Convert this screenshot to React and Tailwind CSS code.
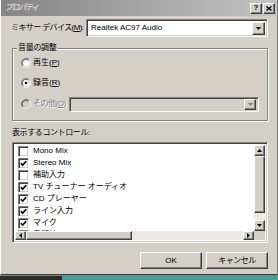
import React from 'react';

const raised =
  'bg-[#d4d0c8] border border-t-white border-l-white border-r-[#404040] border-b-[#404040] shadow-[inset_-1px_-1px_0_#808080]';
const sunken =
  'border border-t-[#808080] border-l-[#808080] border-r-white border-b-white shadow-[inset_1px_1px_0_#404040,inset_-1px_-1px_0_#d4d0c8]';

const Tri = ({ dir = 'down', color = '#000' }) => {
  const d = {
    down: 'M0 0h5L2.5 3z',
    up: 'M0 3h5L2.5 0z',
    left: 'M3 0v5L0 2.5z',
    right: 'M0 0v5l3-2.5z',
  }[dir];
  const vert = dir === 'down' || dir === 'up';
  return (
    <svg width={vert ? 5 : 3} height={vert ? 3 : 5} viewBox={vert ? '0 0 5 3' : '0 0 3 5'}>
      <path d={d} fill={color} />
    </svg>
  );
};

const Radio = ({ checked, disabled }) => (
  <svg width="10" height="10" viewBox="0 0 12 12" className="shrink-0">
    <circle cx="6" cy="6" r="4.6" fill={disabled ? '#d4d0c8' : '#fff'} />
    <path d="M9.9 2.1A5.5 5.5 0 0 0 2.1 9.9" stroke="#808080" fill="none" />
    <path d="M2.1 9.9A5.5 5.5 0 0 0 9.9 2.1" stroke="#fff" fill="none" />
    <path d="M9.2 2.8A4.5 4.5 0 0 0 2.8 9.2" stroke="#404040" fill="none" />
    <path d="M2.8 9.2A4.5 4.5 0 0 0 9.2 2.8" stroke="#d4d0c8" fill="none" />
    {checked && <circle cx="6" cy="6" r="1.6" fill="#000" />}
  </svg>
);

const Check = ({ checked }) => (
  <div className={`w-[11px] h-[11px] bg-white shrink-0 flex items-center justify-center ${sunken}`}>
    {checked && (
      <svg width="7" height="7" viewBox="0 0 7 7">
        <path d="M0.8 3.2L2.7 5.1L6.2 1.2" stroke="#000" strokeWidth="1.6" fill="none" />
      </svg>
    )}
  </div>
);

const controls = [
  ['Mono Mix', false],
  ['Stereo Mix', true],
  ['補助入力', false],
  ['TV チューナー オーディオ', true],
  ['CD プレーヤー', true],
  ['ライン入力', true],
  ['マイク', true],
  ['電話線', false],
];

export default function App() {
  return (
    <div className="w-[278px] h-[280px] flex flex-col overflow-hidden bg-[#d4d0c8] text-[8px] leading-none text-black font-['Liberation_Sans','Noto_Sans_CJK_JP',sans-serif]">
      <div className="flex-1 flex flex-col border-l border-l-white border-r border-r-[#808080] border-b border-b-[#404040]">
        {/* title bar */}
        <div className="h-[16px] flex items-center pl-[4px] pr-[2px] bg-linear-to-r from-[#858585] to-[#c4c4c4]">
          <span className="font-bold italic text-[#d4d0c8] tracking-[-1.3px]">プロパティ</span>
          <div className="ml-auto flex gap-[1px]">
            <div className={`w-[12px] h-[11px] flex items-center justify-center font-bold text-[8px] ${raised}`}>?</div>
            <div className={`w-[12px] h-[11px] flex items-center justify-center ${raised}`}>
              <svg width="6" height="5" viewBox="0 0 6 5">
                <path d="M0.5 0.5L5.5 4.5M5.5 0.5L0.5 4.5" stroke="#000" strokeWidth="1.3" />
              </svg>
            </div>
          </div>
        </div>

        <div className="flex-1 flex flex-col pl-[10px] pr-[9px]">
          {/* mixer device */}
          <div className="mt-[3px] h-[18px] flex items-center">
            <span className="w-[75px] tracking-[-0.6px]">
              ミキサー デバイス(<u>M</u>):
            </span>
            <div className={`flex-1 h-[18px] bg-white flex items-center pl-[4px] pr-[2px] ${sunken}`}>
              <span>Realtek AC97 Audio</span>
              <div className={`ml-auto w-[13px] h-[13px] flex items-center justify-center ${raised}`}>
                <Tri />
              </div>
            </div>
          </div>

          {/* volume group */}
          <div className="relative mt-[11px] ml-[1px] h-[73px] border border-[#808080] shadow-[1px_1px_0_#fff,inset_1px_1px_0_#fff] flex flex-col pt-[5px] pl-[8px] pr-[8px]">
            <span className="absolute -top-[5px] left-[4px] px-[1px] bg-[#d4d0c8] tracking-[-0.3px]">音量の調整</span>
            <div className="h-[18px] flex items-center gap-[2px]">
              <Radio />
              <span>
                再生(<u>P</u>)
              </span>
            </div>
            <div className="mt-[2px] h-[18px] flex items-center gap-[2px]">
              <Radio checked />
              <span>
                録音(<u>R</u>)
              </span>
            </div>
            <div className="mt-[3px] h-[18px] flex items-center gap-[2px]">
              <Radio disabled />
              <span className="text-[#808080] [text-shadow:1px_1px_0_#fff] tracking-[-0.5px]">
                その他(<u>O</u>)
              </span>
              <div className={`ml-auto w-[190px] h-[15px] bg-[#d4d0c8] flex items-center justify-end pr-[2px] ${sunken}`}>
                <div className={`w-[12px] h-[11px] flex items-center justify-center ${raised}`}>
                  <Tri color="#808080" />
                </div>
              </div>
            </div>
          </div>

          {/* controls */}
          <div className="mt-[5px] h-[14px] flex items-center ml-[1px] tracking-[-0.4px]">表示するコントロール:</div>
          <div className={`mt-[2px] ml-[1px] h-[101px] bg-white flex flex-col p-[2px] ${sunken}`}>
            <div className="flex h-[86px]">
              <div className="flex-1 overflow-hidden flex flex-col pl-[3px]">
                {controls.map(([label, on]) => (
                  <div key={label} className="h-[12px] shrink-0 flex items-center gap-[4px]">
                    <Check checked={on} />
                    <span className="whitespace-nowrap">{label}</span>
                  </div>
                ))}
              </div>
              <div className="w-[11px] flex flex-col bg-[#ece9e3]">
                <div className={`h-[11px] flex items-center justify-center ${raised}`}>
                  <Tri dir="up" />
                </div>
                <div className={`h-[57px] ${raised}`} />
                <div className="flex-1" />
                <div className={`h-[11px] flex items-center justify-center ${raised}`}>
                  <Tri />
                </div>
              </div>
            </div>
            <div className="flex h-[11px]">
              <div className="flex-1 flex bg-[#ece9e3]">
                <div className={`w-[11px] flex items-center justify-center ${raised}`}>
                  <Tri dir="left" />
                </div>
                <div className={`w-[106px] ${raised}`} />
                <div className="flex-1" />
                <div className={`w-[11px] flex items-center justify-center ${raised}`}>
                  <Tri dir="right" />
                </div>
              </div>
              <div className="w-[11px] bg-[#d4d0c8]" />
            </div>
          </div>

          {/* buttons */}
          <div className="mt-[9px] flex justify-end gap-[4px]">
            <div className={`w-[62px] h-[17px] flex items-center justify-center ${raised}`}>OK</div>
            <div className={`w-[62px] h-[17px] flex items-center justify-center tracking-[-0.5px] ${raised}`}>
              キャンセル
            </div>
          </div>
        </div>
      </div>
      <div className="h-[5px] flex border-t border-t-[#808080]">
        <div className="w-[62px] bg-[#2c2c2c]" />
        <div className="flex-1 bg-[#4f9b96]" />
      </div>
    </div>
  );
}
